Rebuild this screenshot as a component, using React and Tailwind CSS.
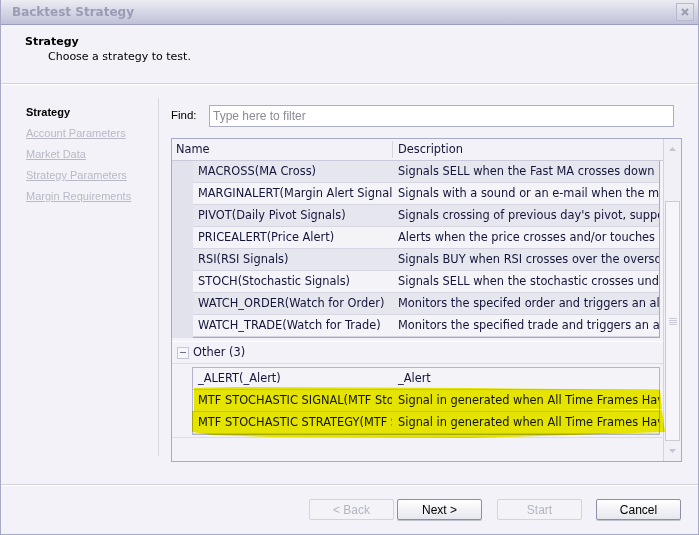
const navLinks = ['Account Parameters', 'Market Data', 'Strategy Parameters', 'Margin Requirements'];

const rows = [
  ['MACROSS(MA Cross)', 'Signals SELL when the Fast MA crosses down'],
  ['MARGINALERT(Margin Alert Signals)', 'Signals with a sound or an e-mail when the margin'],
  ['PIVOT(Daily Pivot Signals)', "Signals crossing of previous day's pivot, support"],
  ['PRICEALERT(Price Alert)', 'Alerts when the price crosses and/or touches'],
  ['RSI(RSI Signals)', 'Signals BUY when RSI crosses over the oversold'],
  ['STOCH(Stochastic Signals)', 'Signals SELL when the stochastic crosses under'],
  ['WATCH_ORDER(Watch for Order)', 'Monitors the specifed order and triggers an alert'],
  ['WATCH_TRADE(Watch for Trade)', 'Monitors the specified trade and triggers an alert'],
];

const others = [
  ['_ALERT(_Alert)', '_Alert'],
  ['MTF STOCHASTIC SIGNAL(MTF Stochastic)', 'Signal in generated when All Time Frames Have'],
  ['MTF STOCHASTIC STRATEGY(MTF Stochastic)', 'Signal in generated when All Time Frames Have'],
];

function Row({ name, desc, shade }) {
  return (
    <div className={`flex h-[22px] items-center overflow-hidden border-b border-[#d6d6e2] ${shade ? 'bg-[#e6e6ef]' : 'bg-[#f3f3f8]'}`}>
      <div className="w-[199px] shrink-0 overflow-hidden whitespace-nowrap pl-[5px]">{name}</div>
      <div className="min-w-0 flex-1 overflow-hidden whitespace-nowrap pl-[6px]">{desc}</div>
    </div>
  );
}

function Button({ children, disabled }) {
  return (
    <button
      className={`h-[21px] w-[85px] rounded-[2px] border text-[12px] ${
        disabled
          ? 'border-[#d4d4de] bg-[#f4f4f8] text-[#b4b4c0]'
          : 'border-[#8e8ea6] bg-gradient-to-b from-[#ffffff] to-[#e6e6ee] text-black shadow-[0_1px_0_#c4c4d0]'
      }`}
    >
      {children}
    </button>
  );
}

export default function App() {
  return (
    <div className="flex h-[535px] w-[699px] flex-col border-x border-b border-[#a7a9c6] bg-[#f2f2f8] font-['Liberation_Sans',sans-serif] text-[12px] text-black">
      {/* title bar */}
      <div className="flex h-[25px] shrink-0 items-center justify-between border-b border-[#9c9ebf] bg-gradient-to-b from-[#ececf3] to-[#bfc1d8] pl-[11px] pr-[4px]">
        <span className="font-['DejaVu_Sans',sans-serif] text-[12px] font-bold text-[#9a9bb5]">Backtest Strategy</span>
        <div className="flex h-[18px] w-[18px] items-center justify-center border border-[#b8b9d0] bg-gradient-to-b from-[#e8e8f0] to-[#cfd0e0]">
          <svg width="8" height="8" viewBox="0 0 8 8">
            <path d="M1 1L7 7M7 1L1 7" stroke="#9c9cb2" strokeWidth="2" />
          </svg>
        </div>
      </div>

      {/* header */}
      <div className="h-[59px] shrink-0 border-b border-[#d2d2dc] pl-[24px] pt-[10px] font-['DejaVu_Sans',sans-serif] text-[11px] shadow-[0_1px_0_#ffffff]">
        <div className="font-bold leading-[14px]">Strategy</div>
        <div className="pl-[23px] leading-[16px]">Choose a strategy to test.</div>
      </div>

      {/* body */}
      <div className="flex h-[400px] shrink-0">
        <div className="w-[157px] shrink-0 pl-[25px] pt-[21px] text-[11px]">
          <div className="h-[21px] font-bold leading-[14px]">Strategy</div>
          {navLinks.map((l) => (
            <div key={l} className="h-[21px] leading-[14px] text-[#b9b9c6] underline">{l}</div>
          ))}
        </div>
        <div className="mt-[14px] h-[358px] w-px bg-[#d8d8e0]" />
        <div className="flex flex-1 flex-col pl-[12px] pt-[21px]">
          <div className="flex h-[22px] items-center">
            <span className="w-[38px] text-[11.5px]">Find:</span>
            <div className="flex h-[22px] w-[465px] items-center border border-[#abadc6] bg-white pl-[3px] text-[12px] text-[#8a8a98]">
              Type here to filter
            </div>
          </div>

          <div className="relative mt-[11px] flex h-[324px] w-[511px] overflow-hidden border border-[#a7a9c6] bg-[#f2f2f8] font-['DejaVu_Sans',sans-serif] text-[11.4px] text-[#15153a]">
            <div className="flex w-[491px] shrink-0 flex-col">
              <div className="flex h-[22px] shrink-0 items-center border-b border-[#c9c9d9]">
                <div className="w-[221px] border-r border-[#d6d6e0] pl-[4px]">Name</div>
                <div className="pl-[5px]">Description</div>
              </div>
              <div className="flex">
                <div className="w-[21px] shrink-0 bg-[#e2e2ec]" />
                <div className="w-[467px] border-b border-r border-[#a8aac4]">
                  {rows.map((r, i) => (
                    <Row key={r[0]} name={r[0]} desc={r[1]} shade={i % 2 === 0} />
                  ))}
                </div>
              </div>
              <div className="mt-[3px] flex h-[23px] items-center border-y border-[#dcdce6] border-t-white pl-[5px]">
                <div className="mr-[4px] flex h-[12px] w-[12px] items-center justify-center border border-[#c4c4d4] bg-[#f6f6fa]">
                  <div className="h-px w-[6px] bg-[#6e6e88]" />
                </div>
                <span>Other (3)</span>
              </div>
              <div className="flex pt-[3px]">
                <div className="w-[20px] shrink-0" />
                <div className="w-[468px] border border-[#b2b4cc]">
                  {others.map((r) => (
                    <Row key={r[0]} name={r[0]} desc={r[1]} shade={false} />
                  ))}
                </div>
              </div>
              <div className="mt-[2px] h-px w-[490px] bg-[#dcdce6]" />
            </div>

            {/* scrollbar */}
            <div className="flex w-[18px] shrink-0 flex-col border-l border-[#d4d4e0] bg-[#f0f0f6]">
              <div className="flex h-[20px] items-center justify-center">
                <svg width="7" height="4" viewBox="0 0 7 4"><path d="M0 4L3.5 0L7 4Z" fill="#c4c4d2" /></svg>
              </div>
              <div className="mx-[1px] mt-[42px] flex h-[240px] items-center justify-center border border-[#cacad8] bg-[#f6f6fa]">
                <div className="flex flex-col gap-[1px]">
                  <div className="h-px w-[8px] bg-[#c8c8d6]" />
                  <div className="h-px w-[8px] bg-[#c8c8d6]" />
                  <div className="h-px w-[8px] bg-[#c8c8d6]" />
                  <div className="h-px w-[8px] bg-[#c8c8d6]" />
                </div>
              </div>
              <div className="flex flex-1 items-center justify-center">
                <svg width="7" height="4" viewBox="0 0 7 4"><path d="M0 0L3.5 4L7 0Z" fill="#c4c4d2" /></svg>
              </div>
            </div>

            {/* marker highlight */}
            <svg className="pointer-events-none absolute left-0 top-0 mix-blend-multiply" width="511" height="324" viewBox="0 0 511 324">
              <path d="M22 249 L60 248 L300 249 L488 251 L490 270 L300 272 L100 271 L22 272 Z" fill="#f0f000" />
              <path d="M20 272 L120 270 L300 270 L490 271 L493 293 L300 299 L100 298 L40 296 L20 293 Z" fill="#f0f000" />
            </svg>
          </div>
        </div>
      </div>

      {/* footer */}
      <div className="flex flex-1 items-start justify-end border-t border-[#d2d2dc] pr-[17px] pt-[14px] shadow-[inset_0_1px_0_#ffffff]">
        <div className="flex">
          <Button disabled>&lt; Back</Button>
          <div className="ml-[3px]"><Button>Next &gt;</Button></div>
          <div className="ml-[15px]"><Button disabled>Start</Button></div>
          <div className="ml-[14px]"><Button>Cancel</Button></div>
        </div>
      </div>
    </div>
  );
}
